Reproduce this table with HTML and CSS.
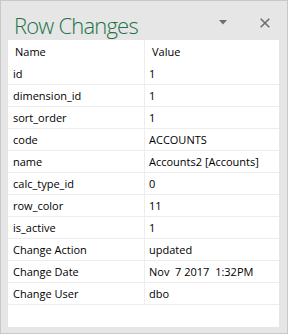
FILE: index.html
```html
<!DOCTYPE html>
<html lang="en">
<head>
    <meta charset="UTF-8">
    <title>Row Changes</title>
    <link rel="stylesheet" href="styles.css">
</head>
<body>
    <div class="pane">
        <header class="pane-header">
            <h1>Row Changes</h1>
            <div class="pane-tools">
                <svg class="menu-icon" width="8" height="5" viewBox="0 0 8 5"><path d="M0 0H8L4 4.5Z" fill="#6e6e6e"/></svg>
                <svg class="close-icon" width="10" height="10" viewBox="0 0 10 10"><path d="M0.7 0.7L9.3 9.3M9.3 0.7L0.7 9.3" stroke="#6e6e6e" stroke-width="1.6"/></svg>
            </div>
        </header>
        <div class="grid">
            <div class="row head"><div class="cell">Name</div><div class="cell">Value</div></div>
            <div class="row"><div class="cell">id</div><div class="cell">1</div></div>
            <div class="row"><div class="cell">dimension_id</div><div class="cell">1</div></div>
            <div class="row"><div class="cell">sort_order</div><div class="cell">1</div></div>
            <div class="row"><div class="cell">code</div><div class="cell">ACCOUNTS</div></div>
            <div class="row"><div class="cell">name</div><div class="cell">Accounts2 [Accounts]</div></div>
            <div class="row"><div class="cell">calc_type_id</div><div class="cell">0</div></div>
            <div class="row"><div class="cell">row_color</div><div class="cell">11</div></div>
            <div class="row"><div class="cell">is_active</div><div class="cell">1</div></div>
            <div class="row"><div class="cell">Change Action</div><div class="cell">updated</div></div>
            <div class="row"><div class="cell">Change Date</div><div class="cell">Nov&nbsp; 7 2017&nbsp; 1:32PM</div></div>
            <div class="row"><div class="cell">Change User</div><div class="cell">dbo</div></div>
        </div>
    </div>
</body>
</html>
```

FILE: styles.css
```css
body {
    margin: 0;
    font-family: 'Open Sans', 'Noto Sans', sans-serif;
}

.pane {
    width: 288px;
    height: 334px;
    box-sizing: border-box;
    border: 1px solid #c8c8c8;
    background-color: #e6e6e6;
    display: flex;
    flex-direction: column;
}

.pane-header {
    height: 39px;
    display: flex;
    align-items: center;
    justify-content: space-between;
    padding: 0 17px 0 13px;
}

.pane-header h1 {
    margin: 0;
    font-size: 22px;
    font-weight: 300;
    letter-spacing: -0.8px;
    color: #217346;
    padding-top: 9px;
}

.pane-tools {
    display: flex;
    align-items: center;
    gap: 33px;
    padding-top: 4px;
}

.grid {
    margin-left: 7px;
    width: 271px;
    height: 287px;
    background-color: #ffffff;
}

.row {
    display: grid;
    grid-template-columns: 136px 1fr;
    height: 21px;
    border-bottom: 1px solid #ededed;
    font-size: 11px;
    color: #000;
}

.row.head {
    height: 23px;
    border-bottom: none;
}

.cell {
    display: flex;
    align-items: center;
    padding-left: 5px;
    white-space: nowrap;
}

.cell + .cell {
    border-left: 1px solid #ededed;
    padding-left: 4px;
}

.head .cell {
    padding-left: 7px;
}

.head .cell + .cell {
    padding-left: 7px;
}
```
